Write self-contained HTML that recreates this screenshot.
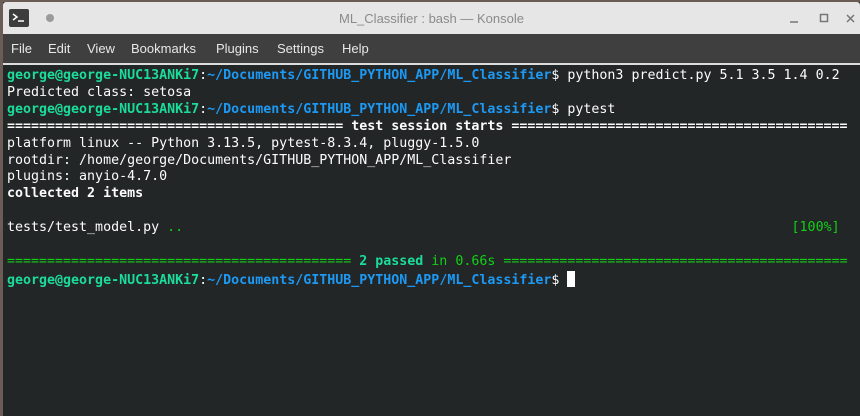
<!DOCTYPE html>
<html><head><meta charset="utf-8"><style>
*{margin:0;padding:0;box-sizing:border-box}
body{width:860px;height:416px;overflow:hidden;background:#6b5c55;position:relative;font-family:"Liberation Sans",sans-serif}
.win{position:absolute;left:3px;top:2px;right:0;bottom:0;background:#232627}
.title{position:absolute;left:0;top:0;right:0;height:32px;background:#e6e6e6;border-radius:3px 3px 0 0}
.title .t{position:absolute;left:0;right:0;top:9px;text-align:center;font-size:13px;color:#8a8a8a;padding-left:0}
.icon{position:absolute;left:6px;top:7px;width:20px;height:18px;background:#3c3c3c;border-radius:2px}
.dot{position:absolute;left:43px;top:12px;width:8px;height:8px;border-radius:50%;background:#9a9a9a}
.menu{position:absolute;left:0;top:32px;right:0;height:29px;background:#3f3f3f;color:#e8e8e8;font-size:13px}
.menu span{position:absolute;top:7px}
.sep{position:absolute;left:0;right:0;top:61px;height:2px;background:#dcdcdc}
.term{position:absolute;left:4px;top:66px;font-family:"DejaVu Sans Mono",monospace;font-size:13.3px;line-height:16.9px;color:#fcfcfc;white-space:pre}
.g{color:#1cdc9a;font-weight:bold}.b{color:#1d99f3;font-weight:bold}.w{font-weight:bold}.gr{color:#11d116}.gb{color:#1cdc9a;font-weight:bold}
.cur{display:inline-block;width:8px;height:16px;background:#fff;vertical-align:-3px}
</style></head><body>
<div class="win">
<div class="title">
<div class="icon"><svg width="20" height="18"><path d="M4 5l4 3-4 3" stroke="#fff" stroke-width="1.5" fill="none"/><path d="M9 12h6" stroke="#fff" stroke-width="1.5"/></svg></div>
<div class="dot"></div>
<div class="t">ML_Classifier : bash — Konsole</div>
<svg style="position:absolute;right:0;top:0" width="90" height="32"><path d="M20 20h8" stroke="#777" stroke-width="1.5"/><rect x="50.5" y="12.5" width="7" height="7" stroke="#777" stroke-width="1.5" fill="none"/><path d="M77 13l7 7M84 13l-7 7" stroke="#777" stroke-width="1.5"/></svg>
</div>
<div class="menu"><span style="left:8px">File</span><span style="left:45px">Edit</span><span style="left:84px">View</span><span style="left:128px">Bookmarks</span><span style="left:213px">Plugins</span><span style="left:274px">Settings</span><span style="left:339px">Help</span></div>
<div class="sep"></div>
<div class="term"><span class="g">george@george-NUC13ANKi7</span>:<span class="b">~/Documents/GITHUB_PYTHON_APP/ML_Classifier</span>$ python3 predict.py 5.1 3.5 1.4 0.2
Predicted class: setosa
<span class="g">george@george-NUC13ANKi7</span>:<span class="b">~/Documents/GITHUB_PYTHON_APP/ML_Classifier</span>$ pytest
<span class="w">========================================== test session starts ==========================================</span>
platform linux -- Python 3.13.5, pytest-8.3.4, pluggy-1.5.0
rootdir: /home/george/Documents/GITHUB_PYTHON_APP/ML_Classifier
plugins: anyio-4.7.0
<span class="w">collected 2 items</span>

tests/test_model.py <span class="gr">..</span>                                                                            <span class="gr">[100%]</span>

<span class="gr">===========================================</span> <span class="gb">2 passed</span><span class="gr"> in 0.66s ===========================================</span>
<span class="g">george@george-NUC13ANKi7</span>:<span class="b">~/Documents/GITHUB_PYTHON_APP/ML_Classifier</span>$ <span class="cur"></span></div>
</div>
</body></html>
